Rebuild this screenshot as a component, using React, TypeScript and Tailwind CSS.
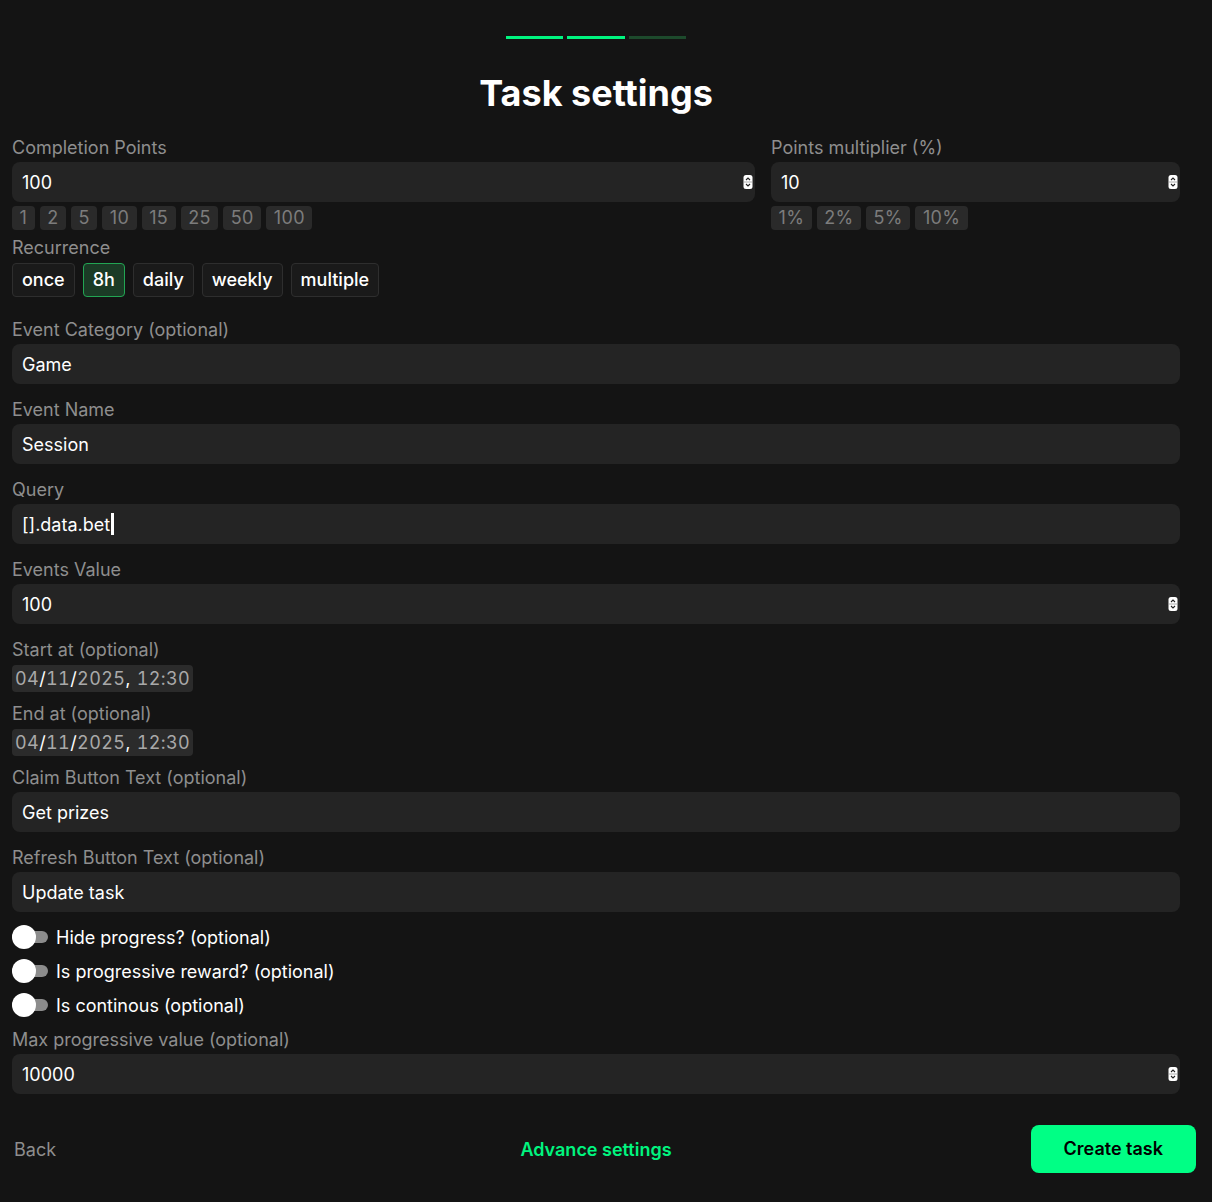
import React from "react";

const FONT = { fontFamily: "Inter, 'Noto Sans', sans-serif" };

function Spinner() {
  return (
    <svg width="10" height="14" viewBox="0 0 10 14" className="absolute right-[2px] top-1/2 -translate-y-1/2">
      <rect x="0.5" y="0" width="9" height="14" rx="2.5" fill="#ffffff" />
      <path d="M3 5 L5 3 L7 5" stroke="#222" strokeWidth="1.1" fill="none" />
      <path d="M3 9 L5 11 L7 9" stroke="#222" strokeWidth="1.1" fill="none" />
      <line x1="1" y1="7" x2="9" y2="7" stroke="#9a9a9a" strokeWidth="0.8" />
    </svg>
  );
}

function Label({ children }: { children: React.ReactNode }) {
  return <div className="text-[18px] leading-[28px] text-[#8e8e8e]">{children}</div>;
}

function Input({ value, spinner, cursor }: { value: string; spinner?: boolean; cursor?: boolean }) {
  return (
    <div className="relative flex h-10 items-center rounded-lg bg-[#242424] px-2.5 text-[18px] text-white">
      <span>{value}</span>
      {cursor && <span className="ml-px inline-block h-[22px] w-[3px] bg-white" />}
      {spinner && <Spinner />}
    </div>
  );
}

function Chips({ items }: { items: string[] }) {
  return (
    <div className="mt-1 flex gap-[5px]">
      {items.map((c) => (
        <span key={c} className="rounded bg-[#2a2a2a] px-[7.5px] text-[18px] leading-6 tracking-[0.35px] text-[#7c7c7c]">
          {c}
        </span>
      ))}
    </div>
  );
}

function Field({ label, value, spinner, cursor }: { label: string; value: string; spinner?: boolean; cursor?: boolean }) {
  return (
    <div className="mb-3">
      <Label>{label}</Label>
      <Input value={value} spinner={spinner} cursor={cursor} />
    </div>
  );
}

function DateBox() {
  const d = "text-[#a9a9a9]";
  return (
    <div className="mt-px inline-flex h-[27px] items-center rounded bg-[#2b2b2b] px-[3px] text-[18px] tracking-[0.4px] text-white tabular-nums">
      <span className={d}>04</span>/<span className={d}>11</span>/<span className={d}>2025</span>,<span className="ml-1.5 text-[#a9a9a9]">12</span>
      <span className={d}>:</span>
      <span className={d}>30</span>
    </div>
  );
}

function Toggle({ label }: { label: string }) {
  return (
    <div className="flex h-6 items-center gap-2">
      <div className="relative h-6 w-9">
        <div className="absolute left-0 top-1/2 h-3 w-9 -translate-y-1/2 rounded-full bg-[#8c8c8c]" />
        <div className="absolute left-0 top-0 h-6 w-6 rounded-full bg-white" />
      </div>
      <span className="text-[18px] text-white">{label}</span>
    </div>
  );
}

export default function App() {
  const rec = ["once", "8h", "daily", "weekly", "multiple"];
  return (
    <div style={FONT} className="min-h-[1202px] w-full bg-[#141414] pb-7">
      <div className="ml-3 w-[1168px]">
        <div className="flex justify-center gap-1 pt-9">
          <div className="h-[3px] w-[57px] bg-[#00f57f]" />
          <div className="h-[3px] w-[58px] bg-[#00f57f]" />
          <div className="h-[3px] w-[57px] bg-[#1d4a2c]" />
        </div>
        <h1 className="mt-[34px] text-center text-[36px] font-bold leading-10 text-white">Task settings</h1>

        <div className="mt-[21px] flex gap-4">
          <div className="w-[743px]">
            <Label>Completion Points</Label>
            <Input value="100" spinner />
            <Chips items={["1", "2", "5", "10", "15", "25", "50", "100"]} />
          </div>
          <div className="w-[409px]">
            <Label>Points multiplier (%)</Label>
            <Input value="10" spinner />
            <Chips items={["1%", "2%", "5%", "10%"]} />
          </div>
        </div>

        <div className="mt-[4px]">
          <Label>Recurrence</Label>
          <div className="mt-px flex gap-2">
            {rec.map((r) => (
              <span
                key={r}
                className={
                  r === "8h"
                    ? "rounded border border-[#22a553] bg-[#1b3b26] px-[9px] py-1 text-[18px] font-medium leading-6 text-white"
                    : "rounded border border-[#2e2e2e] bg-[#1a1a1a] px-[9px] py-1 text-[18px] font-medium leading-6 text-white"
                }
              >
                {r}
              </span>
            ))}
          </div>
        </div>

        <div className="mt-[19px]">
          <Field label="Event Category (optional)" value="Game" />
          <Field label="Event Name" value="Session" />
          <Field label="Query" value="[].data.bet" cursor />
          <Field label="Events Value" value="100" spinner />

          <div className="mb-2">
            <Label>Start at (optional)</Label>
            <DateBox />
          </div>
          <div className="mb-2">
            <Label>End at (optional)</Label>
            <DateBox />
          </div>

          <Field label="Claim Button Text (optional)" value="Get prizes" />
          <Field label="Refresh Button Text (optional)" value="Update task" />

          <div className="flex flex-col gap-2.5 pt-px">
            <Toggle label="Hide progress? (optional)" />
            <Toggle label="Is progressive reward? (optional)" />
            <Toggle label="Is continous (optional)" />
          </div>

          <div className="mt-[9px]">
            <Label>Max progressive value (optional)</Label>
            <Input value="10000" spinner />
          </div>
        </div>

        <div className="mt-[31px] grid grid-cols-[1fr_auto_1fr] items-center">
          <span className="ml-0.5 justify-self-start text-[18px] text-[#8e8e8e]">Back</span>
          <span className="text-[18px] font-semibold text-[#00f57f]">Advance settings</span>
          <span className="-mr-4 justify-self-end rounded-lg bg-[#00ff85] px-[33px] py-3 text-[18px] font-semibold leading-6 text-black">
            Create task
          </span>
        </div>
      </div>
    </div>
  );
}
